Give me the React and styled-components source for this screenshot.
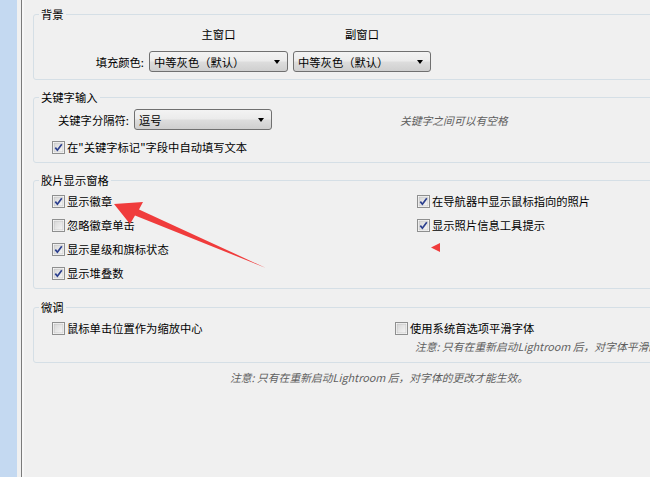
import React from 'react'
import styled, { createGlobalStyle } from 'styled-components'

const GlobalStyle = createGlobalStyle`
  html, body {
    margin: 0;
    padding: 0;
    overflow: hidden;
    background: #f0f0f0;
  }
  body {
    font-family: "Noto Sans CJK SC", "Liberation Sans", sans-serif;
    font-size: 11.3px;
    color: #000;
  }
`

const Window = styled.div`
  display: flex;
  width: 650px;
  height: 477px;
  position: relative;
`

const SideStrip = styled.div`
  width: 17px;
  background: #c4d9f1;
  flex: none;
`

const Gutter = styled.div`
  width: 4px;
  background: #f0f0f0;
  flex: none;
`

const Panel = styled.div`
  flex: 1;
  height: 474px;
  border-left: 1px solid #7b7b7b;
  border-bottom: 1px solid #7b7b7b;
  box-shadow: inset 2px 0 0 #f7f7f7;
  background: #f0f0f0;
  overflow: hidden;
  padding: 6px 0 0 11px;
  box-sizing: content-box;
`

const Inner = styled.div`
  width: 700px;
`

const Group = styled.fieldset`
  margin: 0 0 ${(p) => p.$gap || 9}px;
  padding: 0 0 ${(p) => p.$bottom || 7}px 5px;
  border: 1px solid #d5dfe6;
  border-radius: 3px;
  min-width: 0;
`

const Legend = styled.legend`
  padding: 0 2px;
  line-height: 16px;
`

const ColorGrid = styled.div`
  display: grid;
  grid-template-columns: 105px 139px 138px;
  column-gap: 5px;
  row-gap: 9px;
  margin-top: 4px;
  align-items: center;
`

const ColHead = styled.div`
  line-height: 16px;
  text-align: center;
`

const Label = styled.div`
  line-height: 16px;
  text-align: right;
  white-space: nowrap;
`

const SelectBox = styled.div`
  width: ${(p) => p.$w}px;
  height: 21px;
  box-sizing: border-box;
  border: 1px solid #707070;
  border-radius: 3px;
  background: linear-gradient(#f3f3f3 0%, #ebebeb 48%, #dddddd 52%, #cfcfcf 100%);
  display: flex;
  align-items: center;
  justify-content: space-between;
  padding: 0 7px 0 4px;
  white-space: nowrap;
`

const Arrow = styled.span`
  width: 0;
  height: 0;
  border-left: 3.5px solid transparent;
  border-right: 3.5px solid transparent;
  border-top: 4px solid #000;
  margin-top: 1px;
`

const Select = ({ w, children }) => (
  <SelectBox $w={w}>
    <span>{children}</span>
    <Arrow />
  </SelectBox>
)

const Row = styled.div`
  display: flex;
  align-items: center;
  padding-left: ${(p) => p.$indent || 0}px;
  margin-top: ${(p) => p.$top || 0}px;
  gap: 5px;
  height: ${(p) => p.$h || 16}px;
`

const Hint = styled.span`
  font-style: italic;
  color: #5f5f5f;
  font-size: 10.8px;
  margin-left: ${(p) => p.$left || 0}px;
  white-space: nowrap;
`

const CheckLabel = styled.label`
  display: flex;
  align-items: center;
  gap: 2px;
  line-height: 16px;
  white-space: nowrap;
`

const Box = ({ checked }) => (
  <svg width="13" height="13" viewBox="0 0 13 13">
    <defs>
      <linearGradient id="cbg" x1="0" y1="0" x2="1" y2="1">
        <stop offset="0" stopColor="#d6d6d6" />
        <stop offset="1" stopColor="#f6f6f6" />
      </linearGradient>
    </defs>
    <rect x="0.5" y="0.5" width="12" height="12" fill="#fff" stroke="#8e8f8f" />
    <rect x="2" y="2" width="9" height="9" fill="url(#cbg)" stroke="#bcbcbc" strokeWidth="0.6" />
    {checked && (
      <path d="M3.3 6.6 L5.4 9.2 L9.8 3.2" fill="none" stroke="#2b3f8e" strokeWidth="1.7" />
    )}
  </svg>
)

const Check = ({ checked, children }) => (
  <CheckLabel>
    <Box checked={checked} />
    <span>{children}</span>
  </CheckLabel>
)

const TwoCol = styled.div`
  display: grid;
  grid-template-columns: ${(p) => p.$col}px auto;
  padding-left: 13px;
  margin-top: 5px;
  align-items: start;
`

const Stack = styled.div`
  display: flex;
  flex-direction: column;
  gap: ${(p) => p.$gap || 8}px;
`

const Note = styled.div`
  font-style: italic;
  color: #5f5f5f;
  font-size: 10.8px;
  line-height: 16px;
  padding-left: ${(p) => p.$indent || 0}px;
  margin-top: ${(p) => p.$top || 0}px;
  white-space: nowrap;
`

const Overlay = styled.svg`
  position: absolute;
  left: 0;
  top: 0;
  pointer-events: none;
`

export default function App() {
  return (
    <>
      <GlobalStyle />
      <Window>
        <SideStrip />
        <Gutter />
        <Panel>
          <Inner>
            <Group>
              <Legend>背景</Legend>
              <ColorGrid>
                <span />
                <ColHead>主窗口</ColHead>
                <ColHead>副窗口</ColHead>
                <Label>填充颜色:</Label>
                <Select w={139}>中等灰色（默认）</Select>
                <Select w={138}>中等灰色（默认）</Select>
              </ColorGrid>
            </Group>

            <Group>
              <Legend>关键字输入</Legend>
              <Row $indent={19} $top={4} $h={21}>
                <Label>关键字分隔符:</Label>
                <Select w={138}>逗号</Select>
                <Hint $left={123}>关键字之间可以有空格</Hint>
              </Row>
              <Row $indent={13} $top={9}>
                <Check checked>在"关键字标记"字段中自动填写文本</Check>
              </Row>
            </Group>

            <Group $gap={10}>
              <Legend>胶片显示窗格</Legend>
              <TwoCol $col={365}>
                <Stack>
                  <Check checked>显示徽章</Check>
                  <Check>忽略徽章单击</Check>
                  <Check checked>显示星级和旗标状态</Check>
                  <Check checked>显示堆叠数</Check>
                </Stack>
                <Stack>
                  <Check checked>在导航器中显示鼠标指向的照片</Check>
                  <Check checked>显示照片信息工具提示</Check>
                </Stack>
              </TwoCol>
            </Group>

            <Group $bottom={8} $gap={6}>
              <Legend>微调</Legend>
              <TwoCol $col={343}>
                <Check>鼠标单击位置作为缩放中心</Check>
                <Stack $gap={2}>
                  <Check>使用系统首选项平滑字体</Check>
                  <Note $indent={20}>注意: 只有在重新启动Lightroom 后，对字体平滑的更改才能生效。</Note>
                </Stack>
              </TwoCol>
            </Group>

            <Note $indent={197}>注意: 只有在重新启动Lightroom 后，对字体的更改才能生效。</Note>
          </Inner>
        </Panel>

        <Overlay width="650" height="477" viewBox="0 0 650 477">
          <polygon
            points="114,204 143,202 139,209.5 266,268 135,215.5 130,224"
            fill="#f03c3c"
          />
          <polygon points="431,247.5 440,243 440,252" fill="#f03c3c" />
        </Overlay>
      </Window>
    </>
  )
}
